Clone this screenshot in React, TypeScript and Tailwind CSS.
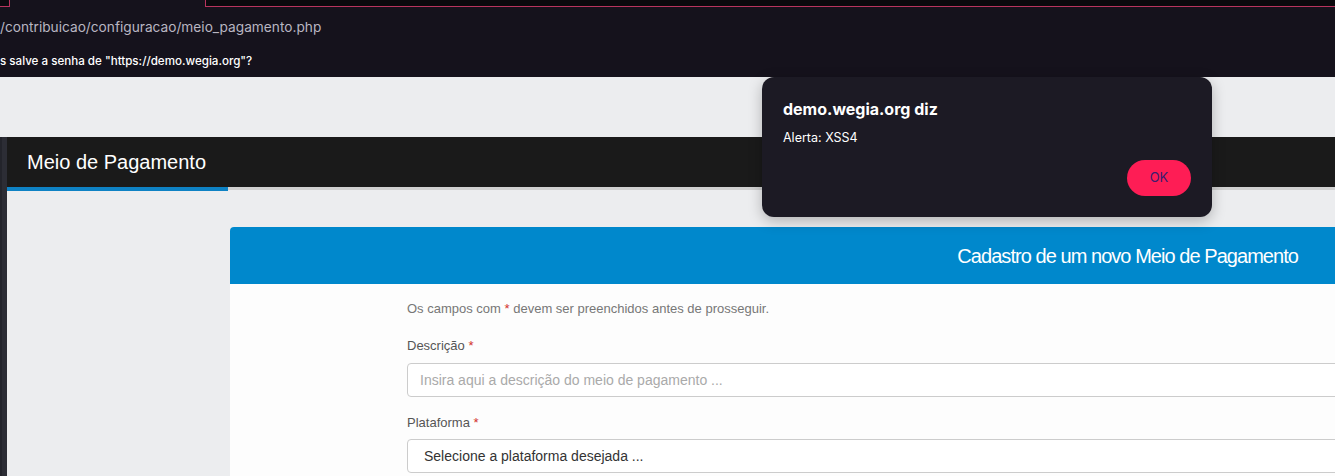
export default function App() {
  return (
    <div className="relative w-[1335px] h-[476px] overflow-hidden bg-[#ecedef] font-['Liberation_Sans',Arial,sans-serif]">
      {/* browser chrome */}
      <div className="h-[77px] bg-[#15121c] flex flex-col">
        <div className="flex h-[7px] shrink-0">
          <div className="w-[10px] border-r border-b border-[#b8345e] bg-[#0c0a10]" />
          <div className="w-[195px]" />
          <div className="flex-1 border-l border-b border-[#b8345e] bg-[#0a090d]" />
        </div>
        <div className="h-[37px] pt-[4px] flex items-center text-[13.7px] text-[#b9b6c2] font-['Inter',sans-serif]">
          /contribuicao/configuracao/meio_pagamento.php
        </div>
        <div className="h-[33px] pt-[2px] flex items-center text-[11.6px] text-white font-medium font-['Inter',sans-serif]">
          s salve a senha de "https://demo.wegia.org"?
        </div>
      </div>

      <div className="h-[60px]" />

      <div className="flex h-[339px]">
        <div className="w-[7px] bg-[#2c2d35] border-l-2 border-[#23242b]" />
        <div className="flex-1 flex flex-col min-w-0">
          <div className="h-[50px] shrink-0 bg-[#1a1a1a] flex items-center pl-[20px]">
            <span className="text-white text-[20px]">Meio de Pagamento</span>
          </div>
          <div className="flex h-[4px] shrink-0">
            <div className="w-[221px] bg-[#0e82c4]" />
            <div className="flex-1 h-[3px] bg-[#d0d0d0]" />
          </div>

          <div className="pl-[223px] pt-[36px] flex-1 flex flex-col">
            <div className="w-[1140px] flex-1 flex flex-col rounded-tl-[4px] overflow-hidden bg-[#fdfdfd]">
              <div className="h-[57px] shrink-0 bg-[#0088cc] flex items-center justify-end pr-[72px]">
                <span className="text-white text-[20px] tracking-[-0.95px]">Cadastro de um novo Meio de Pagamento</span>
              </div>
              <div className="pl-[177px] pt-[16px] flex flex-col">
                <p className="text-[13px] leading-[18px] text-[#777]">
                  Os campos com <span className="text-[#d2322d]">*</span> devem ser preenchidos antes de prosseguir.
                </p>
                <label className="mt-[19px] text-[13px] leading-[18px] text-[#555]">
                  Descrição <span className="text-[#d2322d]">*</span>
                </label>
                <div className="mt-[8px] h-[34px] shrink-0 bg-white border border-[#ccc] rounded-[4px] flex items-center pl-[12px] text-[14px] text-[#aaa]">
                  Insira aqui a descrição do meio de pagamento ...
                </div>
                <label className="mt-[17px] text-[13px] leading-[18px] text-[#555]">
                  Plataforma <span className="text-[#d2322d]">*</span>
                </label>
                <div className="mt-[7px] h-[34px] shrink-0 bg-white border border-[#ccc] rounded-[4px] flex items-center pl-[16px] text-[14px] text-[#333]">
                  Selecione a plataforma desejada ...
                </div>
              </div>
            </div>
          </div>
        </div>
      </div>

      {/* alert dialog */}
      <div className="absolute left-[762px] top-[77px] w-[450px] h-[140px] rounded-[12px] bg-[#1c1a24] shadow-[0_4px_14px_rgba(0,0,0,0.25)] font-['Inter',sans-serif] flex flex-col px-[21px] pt-[21px]">
        <div className="text-white text-[16px] font-bold leading-[22px]">demo.wegia.org diz</div>
        <div className="mt-[10px] text-white text-[12.5px] leading-[16px]">Alerta: XSS4</div>
        <div className="flex justify-end mt-[14px]">
          <button className="w-[64px] h-[36px] rounded-full bg-[#fe1d55] text-[#3b1c6e] text-[13px]">OK</button>
        </div>
      </div>
    </div>
  );
}
